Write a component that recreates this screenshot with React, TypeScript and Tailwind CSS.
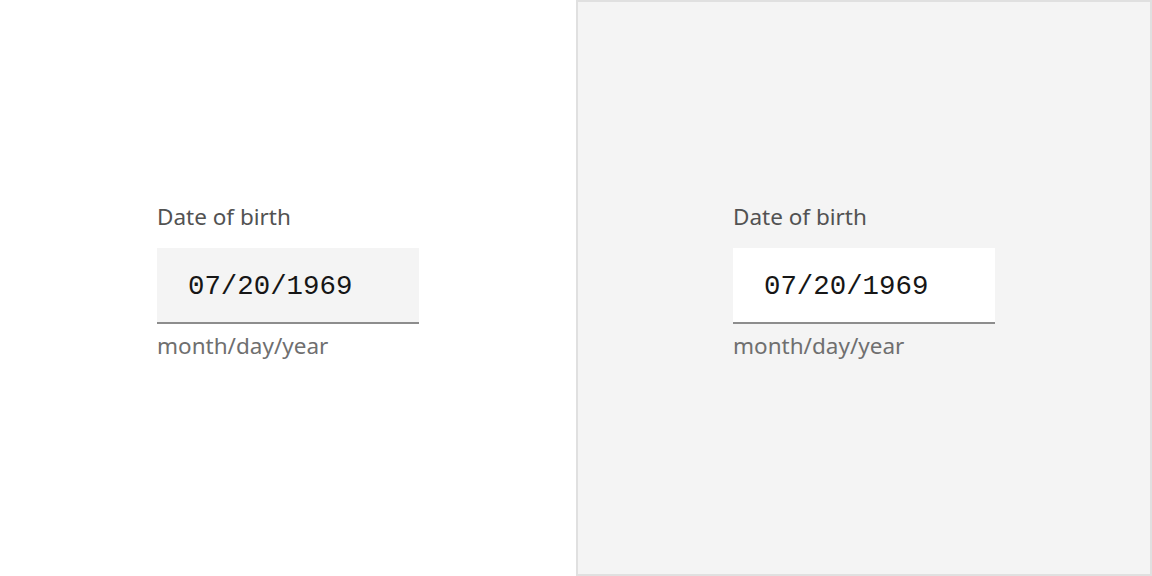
import React from "react";

function Field({ fieldBg }: { fieldBg: string }) {
  return (
    <div className="flex w-[262px] flex-col pb-[14px]">
      <div className="whitespace-nowrap text-[22.5px] leading-[30px] text-[#525252]" style={{ fontFamily: '"Noto Sans", sans-serif' }}>
        Date of birth
      </div>
      <div className={`mt-[16px] flex h-[76px] items-center border-b-2 border-[#8d8d8d] pl-[31px] pt-[5px] ${fieldBg}`}>
        <span className="text-[27.4px] text-[#161616]" style={{ fontFamily: '"Liberation Mono", monospace' }}>
          07/20/1969
        </span>
      </div>
      <div className="mt-[7px] whitespace-nowrap text-[22.5px] leading-[30px] text-[#6f6f6f]" style={{ fontFamily: '"Noto Sans", sans-serif' }}>
        month/day/year
      </div>
    </div>
  );
}

export default function App() {
  return (
    <div className="flex h-[576px] w-[1152px] bg-white">
      <div className="flex h-full w-[576px] items-center justify-center">
        <Field fieldBg="bg-[#f4f4f4]" />
      </div>
      <div className="flex h-full w-[576px] items-center justify-center border-2 border-[#e0e0e0] bg-[#f4f4f4]">
        <Field fieldBg="bg-white" />
      </div>
    </div>
  );
}
